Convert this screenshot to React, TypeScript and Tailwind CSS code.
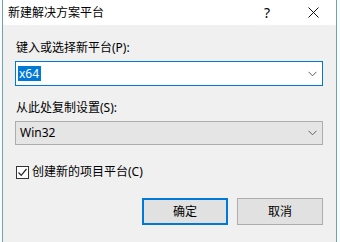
const font = { fontFamily: '"Noto Sans", "Noto Sans CJK SC", sans-serif' };

function Chevron() {
  return (
    <svg width="9" height="6" viewBox="0 0 9 6" className="shrink-0">
      <path d="M0.5 0.8 L4.5 4.8 L8.5 0.8" fill="none" stroke="#606060" strokeWidth="1" />
    </svg>
  );
}

export default function App() {
  return (
    <div className="w-[340px] h-[242px] bg-[#fbfbfb] overflow-hidden text-[12px] text-black" style={font}>
      <div className="ml-[2px] w-[335px] h-[242px] border-x border-[#6aa6b0] flex flex-col">
        {/* 标题栏 */}
        <div className="h-[25px] bg-white flex items-center shrink-0">
          <span className="pl-[5px] leading-none">新建解决方案平台</span>
          <span className="ml-auto w-[46px] text-center text-[14px] leading-none">?</span>
          <span className="w-[46px] flex justify-center">
            <svg width="11" height="11" viewBox="0 0 11 11">
              <path d="M0.5 0.5 L10.5 10.5 M10.5 0.5 L0.5 10.5" stroke="#111" strokeWidth="1" />
            </svg>
          </span>
        </div>

        {/* 内容 */}
        <div className="flex-1 bg-[#f0f0f0] pl-[12px] pr-[12px] pt-[15px] flex flex-col">
          <div className="pl-[1px] leading-[16px]">键入或选择新平台(P):</div>
          <div className="mt-[5px] h-[25px] w-[308px] border border-[#0078d7] bg-white flex items-center pl-[2px] pr-[5px]">
            <span className="bg-[#0078d7] text-white leading-[15px] px-[1px] pr-[2px]">x64</span>
            <span className="ml-auto"><Chevron /></span>
          </div>

          <div className="mt-[14px] pl-[1px] leading-[16px]">从此处复制设置(S):</div>
          <div className="mt-[5px] h-[24px] w-[308px] border border-[#adadad] bg-[#e5e5e5] flex items-center pl-[4px] pr-[5px]">
            <span>Win32</span>
            <span className="ml-auto"><Chevron /></span>
          </div>

          <label className="mt-[19px] flex items-center gap-[3px] pl-[1px]">
            <span className="w-[13px] h-[13px] border border-[#333] bg-white flex items-center justify-center">
              <svg width="11" height="11" viewBox="0 0 11 11">
                <path d="M1.5 5.5 L4.2 8.3 L9.5 2" fill="none" stroke="#222" strokeWidth="1.2" />
              </svg>
            </span>
            <span className="leading-[16px]">创建新的项目平台(C)</span>
          </label>

          <div className="mt-[18px] w-[308px] flex justify-end gap-[9px]">
            <button className="w-[86px] h-[27px] border-2 border-[#0078d7] bg-[#e1e1e1] leading-none" style={font}>
              确定
            </button>
            <button className="w-[86px] h-[27px] border border-[#adadad] bg-[#e1e1e1] leading-none" style={font}>
              取消
            </button>
          </div>
        </div>
      </div>
    </div>
  );
}
